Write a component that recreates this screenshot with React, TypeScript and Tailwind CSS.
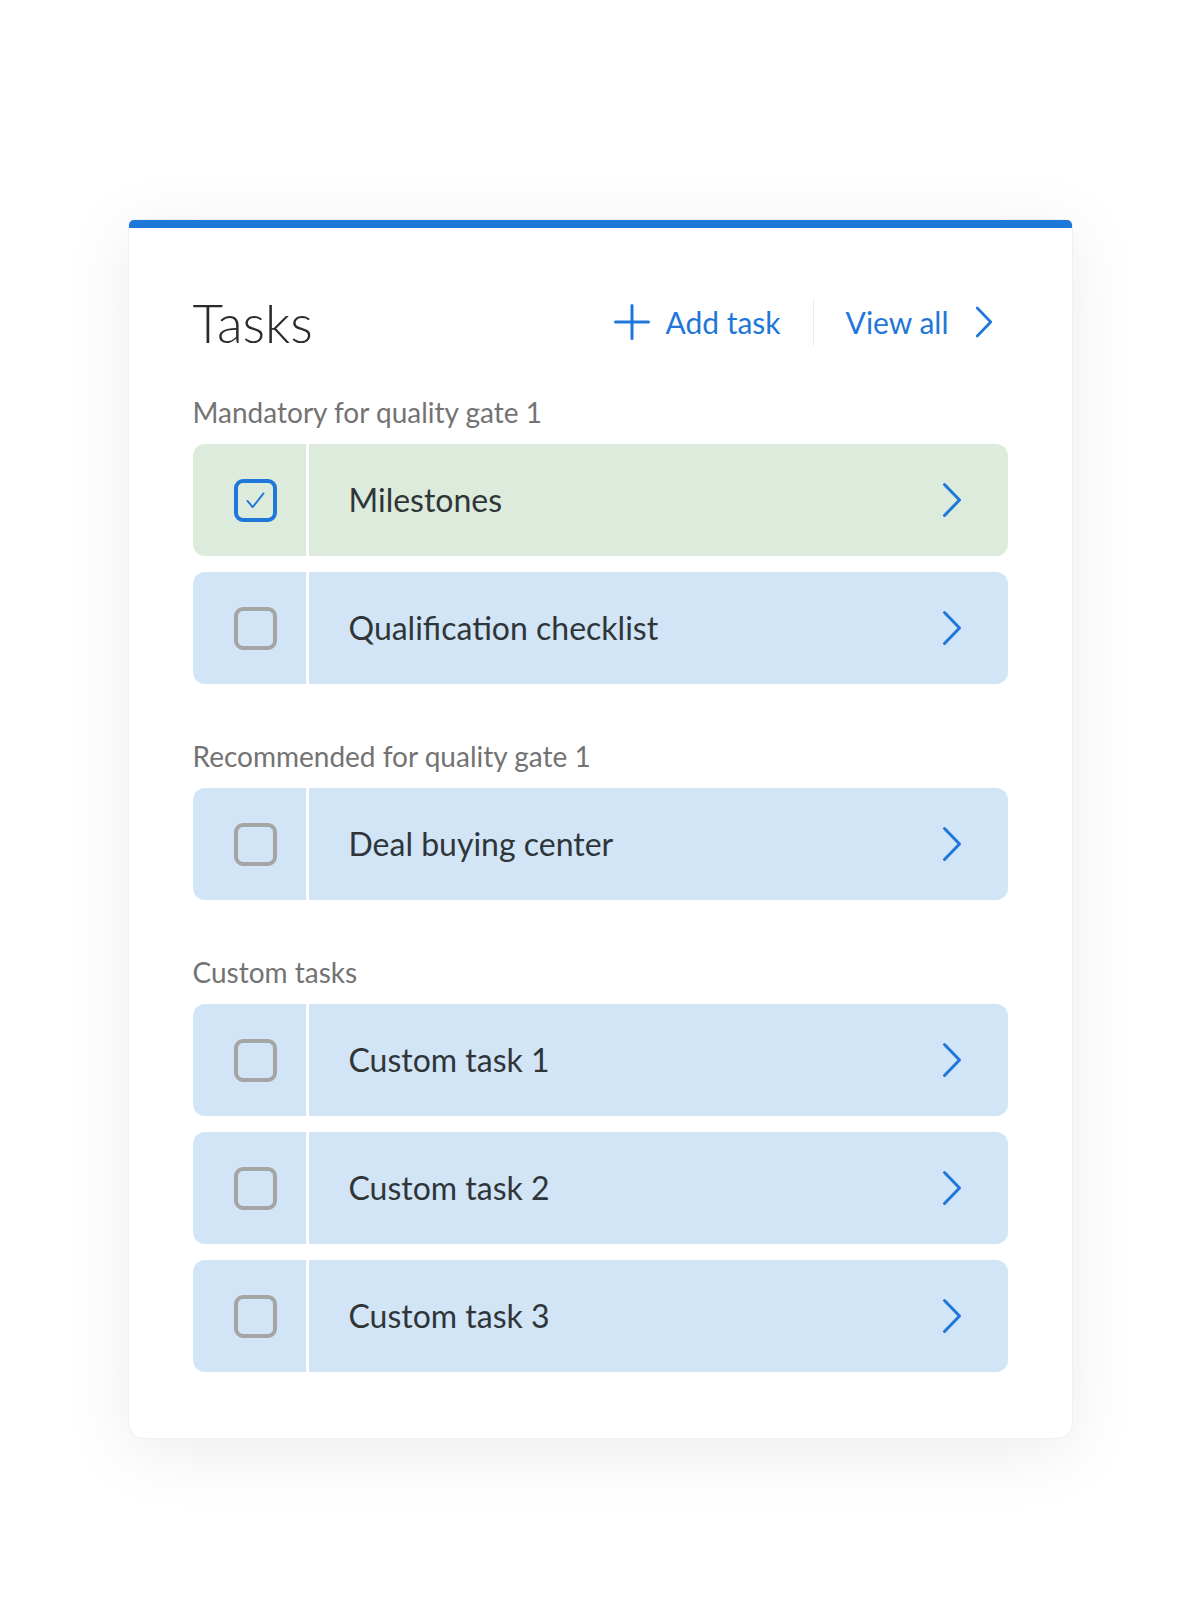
import React from "react";

type Task = { label: string; done?: boolean };

const sections: { title: string; tasks: Task[] }[] = [
  {
    title: "Mandatory for quality gate 1",
    tasks: [{ label: "Milestones", done: true }, { label: "Qualification checklist" }],
  },
  {
    title: "Recommended for quality gate 1",
    tasks: [{ label: "Deal buying center" }],
  },
  {
    title: "Custom tasks",
    tasks: [{ label: "Custom task 1" }, { label: "Custom task 2" }, { label: "Custom task 3" }],
  },
];

function Chevron({ className = "" }: { className?: string }) {
  return (
    <svg viewBox="0 0 20 36" className={className} fill="none">
      <path d="M2.5 2.5 L17.5 18 L2.5 33.5" stroke="currentColor" strokeWidth="3" strokeLinecap="round" strokeLinejoin="round" />
    </svg>
  );
}

function Plus() {
  return (
    <svg viewBox="0 0 36 36" className="w-[36px] h-[36px]" fill="none">
      <path d="M18 1.5 V34.5 M1.5 18 H34.5" stroke="currentColor" strokeWidth="3" strokeLinecap="round" />
    </svg>
  );
}

function Checkbox({ checked }: { checked?: boolean }) {
  if (checked) {
    return (
      <div className="w-[43px] h-[43px] rounded-[9px] border-[4px] border-[#1f77d9] flex items-center justify-center">
        <svg viewBox="0 0 20 18" className="w-[19px] h-[17px]" fill="none">
          <path d="M1.5 9.5 L7 16 L18.5 1.5" stroke="#1f77d9" strokeWidth="2" strokeLinecap="round" strokeLinejoin="round" />
        </svg>
      </div>
    );
  }
  return <div className="w-[43px] h-[43px] rounded-[9px] border-[4px] border-[#a5a5a5]" />;
}

function TaskRow({ task }: { task: Task }) {
  return (
    <div className={`flex h-[112px] rounded-[12px] ${task.done ? "bg-[#dcebdb]" : "bg-[#d1e5f7]"}`}>
      <div className="w-[116px] flex items-center pl-[41px] border-r-[3px] border-white">
        <Checkbox checked={task.done} />
      </div>
      <div className="flex-1 flex items-center pl-[40px] pr-[46px]">
        <span className="flex-1 text-[32px] text-[#2f3538]">{task.label}</span>
        <Chevron className="w-[20px] h-[36px] text-[#1f77d9]" />
      </div>
    </div>
  );
}

export default function App() {
  return (
    <div className="min-h-[1600px] bg-white pt-[219px] font-['Lato',sans-serif]">
      <div className="w-[945px] mx-auto bg-white rounded-t-[6px] rounded-b-[16px] overflow-hidden border border-[#f0f0f0] shadow-[0_12px_70px_rgba(0,0,0,0.08)]">
        <div className="h-[8px] bg-[#1f77d9]" />
        <div className="px-[64px] pb-[66px]">
          <div className="mt-[62px] h-[64px] flex items-center">
            <h1 className="flex-1 text-[53px] font-light text-[#2b2b2b] leading-none">Tasks</h1>
            <div className="flex items-center text-[#1f77d9] pr-[15px]">
              <button className="flex items-center gap-[15px]">
                <Plus />
                <span className="text-[30px]">Add task</span>
              </button>
              <div className="w-px h-[48px] bg-[#ececec] mx-[32px]" />
              <button className="flex items-center gap-[26px]">
                <span className="text-[30px]">View all</span>
                <Chevron className="w-[18px] h-[34px]" />
              </button>
            </div>
          </div>
          <div className="mt-[42px] flex flex-col gap-[56px]">
            {sections.map((s) => (
              <div key={s.title}>
                <div className="h-[32px] flex items-center text-[28px] text-[#737373] mb-[16px]">{s.title}</div>
                <div className="flex flex-col gap-[16px]">
                  {s.tasks.map((t) => (
                    <TaskRow key={t.label} task={t} />
                  ))}
                </div>
              </div>
            ))}
          </div>
        </div>
      </div>
    </div>
  );
}
